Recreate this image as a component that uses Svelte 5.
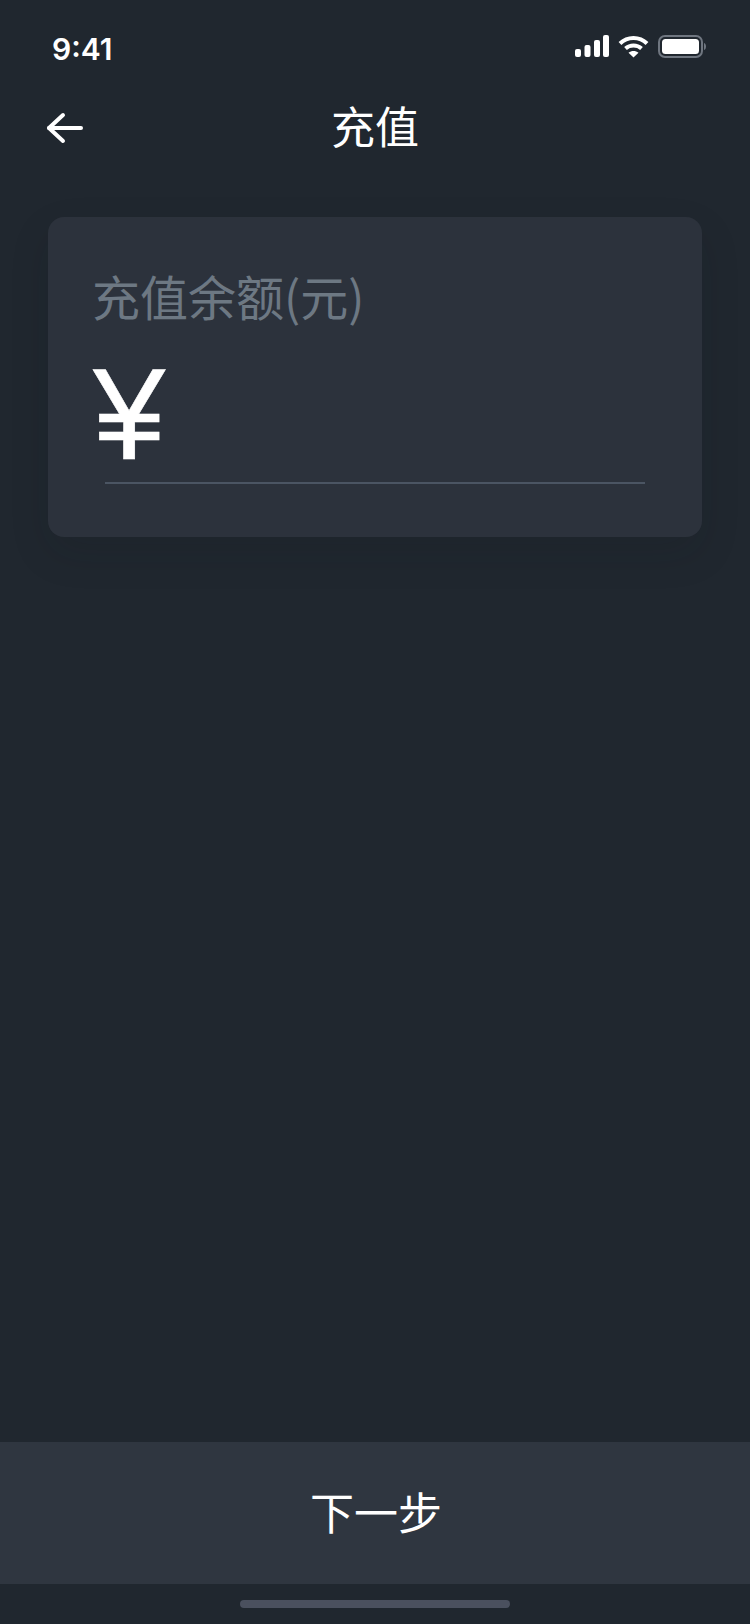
<script>
  let title = "充值";
  let label = "充值余额(元)";
  let next = "下一步";
</script>

<div class="page">
  <div class="status">
    <span class="time">9:41</span>
    <div class="status-icons">
      <svg width="34" height="22" viewBox="0 0 34 22" fill="#fff">
        <rect x="0" y="14" width="6" height="8" rx="2" />
        <rect x="9.500" y="10" width="6" height="12" rx="2" />
        <rect x="19" y="5" width="6" height="17" rx="2" />
        <rect x="28" y="0" width="6" height="22" rx="2" />
      </svg>
      <svg width="31" height="23" viewBox="0 0 31 23" fill="none" stroke="#fff" stroke-width="4">
        <path d="M2 8.500C9.500 1 21.500 1 29 8.500" />
        <path d="M7.500 13.500C12 9.500 19 9.500 23.500 13.500" />
        <path d="M15.500 22.500L10.500 17.800C13.500 15.500 17.500 15.500 20.500 17.800Z" fill="#fff" stroke="none" />
      </svg>
      <svg width="48" height="23" viewBox="0 0 48 23" fill="none">
        <rect x="1" y="1" width="43" height="21" rx="6" stroke="#6f7680" stroke-width="2" />
        <rect x="4" y="4" width="37" height="15" rx="3.500" fill="#fff" />
        <path d="M46 8C47.500 8.500 48 10 48 11.500C48 13 47.500 14.500 46 15Z" fill="#6f7680" />
      </svg>
    </div>
  </div>

  <div class="nav">
    <button class="back" aria-label="back">
      <svg width="37" height="32" viewBox="0 0 37 32" fill="none" stroke="#fff" stroke-width="4" stroke-linecap="round" stroke-linejoin="round">
        <path d="M17 3L3 16L17 29" />
        <path d="M3 16H35" />
      </svg>
    </button>
    <span class="title">{title}</span>
  </div>

  <div class="card">
    <div class="label">{label}</div>
    <div class="yen">¥</div>
    <div class="line"></div>
  </div>

  <div class="spacer"></div>

  <div class="next">{next}</div>
  <div class="home"><div class="indicator"></div></div>
</div>

<style>
  :global(body) {
    margin: 0;
    background: #20272f;
  }
  .page {
    width: 750px;
    height: 1624px;
    display: flex;
    flex-direction: column;
    background: #20272f;
    color: #fff;
    font-family: "Noto Sans CJK SC", "Liberation Sans", sans-serif;
  }
  .status {
    height: 88px;
    display: flex;
    justify-content: space-between;
    align-items: center;
    padding: 4px 44px 0 52px;
    box-sizing: border-box;
  }
  .time {
    font-family: Inter, "Liberation Sans", sans-serif;
    font-size: 30px;
    font-weight: 600;
    margin-top: 5px;
  }
  .status-icons {
    display: flex;
    align-items: center;
    gap: 9px;
  }
  .nav {
    height: 80px;
    display: flex;
    align-items: center;
    justify-content: center;
    position: relative;
  }
  .back {
    position: absolute;
    left: 46px;
    top: 24px;
    padding: 0;
    border: none;
    background: none;
    display: flex;
  }
  .title {
    font-size: 44px;
    line-height: 60px;
    margin-bottom: 7px;
  }
  .card {
    margin: 49px 48px 0;
    height: 320px;
    box-sizing: border-box;
    padding: 44px 57px 0 44px;
    background: #2c323c;
    border-radius: 16px;
    box-shadow: 0 16px 40px rgba(20, 22, 28, 0.12);
  }
  .label {
    font-size: 48px;
    line-height: 68px;
    color: #6d7883;
  }
  .yen {
    font-family: "Liberation Sans", sans-serif;
    font-size: 130px;
    line-height: 120px;
    margin-top: 25px;
    padding-left: 1px;
    -webkit-text-stroke: 0.5px #fff;
  }
  .line {
    height: 2px;
    margin: 8px 0 0 13px;
    background: #4b5563;
  }
  .spacer {
    flex: 1;
  }
  .next {
    height: 142px;
    display: flex;
    align-items: center;
    justify-content: center;
    background: #2f3640;
    font-size: 44px;
    padding: 0 0 4px 2px;
    box-sizing: border-box;
  }
  .home {
    height: 40px;
    display: flex;
    justify-content: center;
    padding-top: 16px;
    box-sizing: border-box;
  }
  .indicator {
    width: 270px;
    height: 8px;
    border-radius: 4px;
    background: #4a505e;
  }
</style>
